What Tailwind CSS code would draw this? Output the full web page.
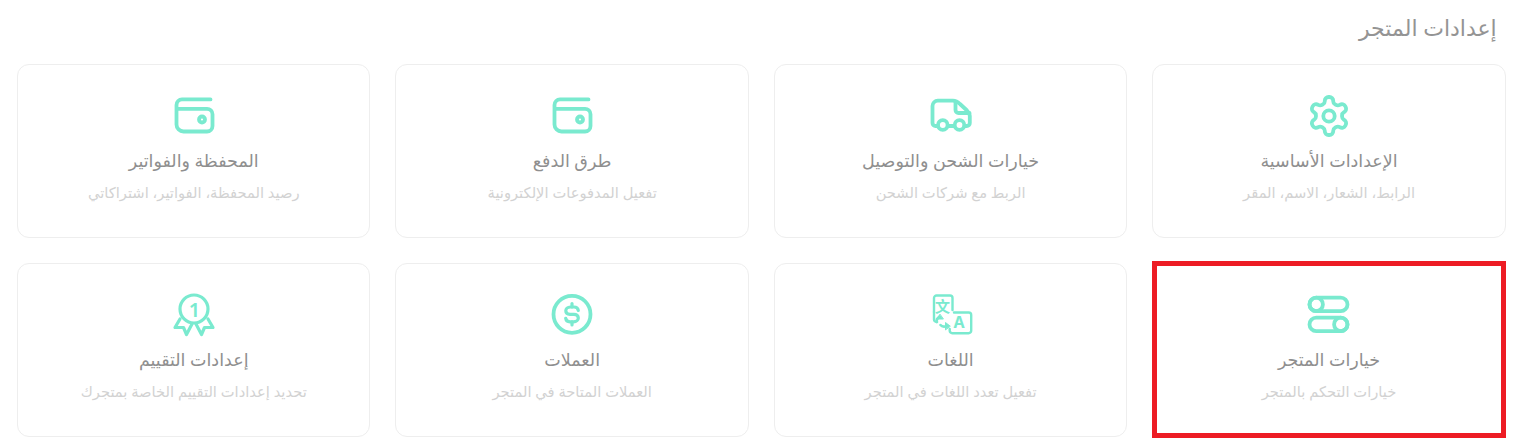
<!DOCTYPE html>
<html lang="ar" dir="rtl">
<head>
<meta charset="utf-8">
<title>إعدادات المتجر</title>
<script src="https://cdn.jsdelivr.net/npm/@tailwindcss/browser@4"></script>
</head>
<body class="bg-white font-['Noto_Sans','DejaVu_Sans',sans-serif] overflow-hidden">
<div class="relative h-[438px] pr-[31.25px] pl-[17px]">

    <!-- العنوان -->
    <h1 class="h-[64px] pt-[13px] pr-[9px] pb-0 text-[22px] leading-[28px] font-normal text-[#949494]">إعدادات المتجر</h1>

    <!-- البطاقات -->
    <div class="grid grid-cols-4 gap-x-[25px] gap-y-[25px]">

        <a class="h-[174px] rounded-xl border border-[#eeeeee] bg-white pt-[27px] flex flex-col items-center">
            <svg class="w-12 h-12 text-[#7aeacf]" viewBox="0 0 48 48" fill="none" stroke="currentColor" stroke-linecap="round" stroke-linejoin="round">
                <g transform="translate(1.2 1.2) scale(1.9)" stroke-width="2">
                    <path d="M12.22 2h-.44a2 2 0 0 0-2 2v.18a2 2 0 0 1-1 1.73l-.43.25a2 2 0 0 1-2 0l-.15-.08a2 2 0 0 0-2.73.73l-.22.38a2 2 0 0 0 .73 2.73l.15.1a2 2 0 0 1 1 1.72v.51a2 2 0 0 1-1 1.74l-.15.09a2 2 0 0 0-.73 2.73l.22.38a2 2 0 0 0 2.73.73l.15-.08a2 2 0 0 1 2 0l.43.25a2 2 0 0 1 1 1.73V20a2 2 0 0 0 2 2h.44a2 2 0 0 0 2-2v-.18a2 2 0 0 1 1-1.73l.43-.25a2 2 0 0 1 2 0l.15.08a2 2 0 0 0 2.73-.73l.22-.39a2 2 0 0 0-.73-2.73l-.15-.08a2 2 0 0 1-1-1.74v-.5a2 2 0 0 1 1-1.74l.15-.09a2 2 0 0 0 .73-2.73l-.22-.38a2 2 0 0 0-2.73-.73l-.15.08a2 2 0 0 1-2 0l-.43-.25a2 2 0 0 1-1-1.73V4a2 2 0 0 0-2-2z"/>
                    <circle cx="12" cy="12" r="3"/>
                </g>
            </svg>
            <h2 class="mt-[7px] text-[17.500px] leading-[26px] font-medium text-[#8f8f8f]">الإعدادات الأساسية</h2>
            <p class="mt-[7px] text-[14.700px] leading-[24px] text-[#d2d2d2]">الرابط، الشعار، الاسم، المقر</p>
        </a>

        <a class="h-[174px] rounded-xl border border-[#eeeeee] bg-white pt-[27px] flex flex-col items-center">
            <svg class="w-12 h-12 text-[#7aeacf]" viewBox="0 0 48 48" fill="none" stroke="currentColor" stroke-width="3.8" stroke-linecap="round" stroke-linejoin="round">
                <path d="M10.500 34H8.500a3 3 0 0 1-3-3V14a5.300 5.300 0 0 1 5.300-5.300H26C29 8.700 31 10 33 12L40 18.500C42 20.500 42.800 21.500 42.800 24V31a3 3 0 0 1-3 3H37.500"/>
                <path d="M28.500 10V18a3 3 0 0 0 3 3H42.500"/>
                <path d="M21 34H27"/>
                <circle cx="15.800" cy="33" r="4.800"/>
                <circle cx="32.500" cy="33" r="4.800"/>
            </svg>
            <h2 class="mt-[7px] text-[17.500px] leading-[26px] font-medium text-[#8f8f8f]">خيارات الشحن والتوصيل</h2>
            <p class="mt-[7px] text-[14.700px] leading-[24px] text-[#d2d2d2]">الربط مع شركات الشحن</p>
        </a>

        <a class="h-[174px] rounded-xl border border-[#eeeeee] bg-white pt-[27px] flex flex-col items-center">
            <svg class="w-12 h-12 text-[#7aeacf]" viewBox="0 0 48 48" fill="none" stroke="currentColor" stroke-width="3.8" stroke-linecap="round" stroke-linejoin="round">
                <path d="M40.500 7.400H12a5.500 5.500 0 0 0-5.500 5.500V32.500a7 7 0 0 0 7 7H37a5.500 5.500 0 0 0 5.500-5.500V22.300A5.500 5.500 0 0 0 37 16.800H6.500"/>
                <circle cx="32" cy="27.500" r="3"/>
            </svg>
            <h2 class="mt-[7px] text-[17.500px] leading-[26px] font-medium text-[#8f8f8f]">طرق الدفع</h2>
            <p class="mt-[7px] text-[14.700px] leading-[24px] text-[#d2d2d2]">تفعيل المدفوعات الإلكترونية</p>
        </a>

        <a class="h-[174px] rounded-xl border border-[#eeeeee] bg-white pt-[27px] flex flex-col items-center">
            <svg class="w-12 h-12 text-[#7aeacf]" viewBox="0 0 48 48" fill="none" stroke="currentColor" stroke-width="3.8" stroke-linecap="round" stroke-linejoin="round">
                <path d="M40.500 7.400H12a5.500 5.500 0 0 0-5.500 5.500V32.500a7 7 0 0 0 7 7H37a5.500 5.500 0 0 0 5.500-5.500V22.300A5.500 5.500 0 0 0 37 16.800H6.500"/>
                <circle cx="32" cy="27.500" r="3"/>
            </svg>
            <h2 class="mt-[7px] text-[17.500px] leading-[26px] font-medium text-[#8f8f8f]">المحفظة والفواتير</h2>
            <p class="mt-[7px] text-[14.700px] leading-[24px] text-[#d2d2d2]">رصيد المحفظة، الفواتير، اشتراكاتي</p>
        </a>

        <a class="h-[174px] rounded-xl border border-[#eeeeee] bg-white pt-[27px] flex flex-col items-center">
            <svg class="w-12 h-12 text-[#7aeacf]" viewBox="0 0 48 48" fill="none" stroke="currentColor" stroke-width="3.8" stroke-linecap="round" stroke-linejoin="round">
                <rect x="4.500" y="6.700" width="38" height="13.400" rx="6.700"/>
                <circle cx="11.200" cy="13.400" r="6.700"/>
                <rect x="4.500" y="26.700" width="38" height="13.400" rx="6.700"/>
                <circle cx="35.800" cy="33.400" r="6.700"/>
            </svg>
            <h2 class="mt-[7px] text-[17.500px] leading-[26px] font-medium text-[#8f8f8f]">خيارات المتجر</h2>
            <p class="mt-[7px] text-[14.700px] leading-[24px] text-[#d2d2d2]">خيارات التحكم بالمتجر</p>
        </a>

        <a class="h-[174px] rounded-xl border border-[#eeeeee] bg-white pt-[27px] flex flex-col items-center">
            <svg class="w-12 h-12 text-[#7aeacf]" viewBox="0 0 48 48" fill="none" stroke="currentColor" stroke-width="2.400" stroke-linecap="round" stroke-linejoin="round">
                <path d="M7 21V7a2.500 2.500 0 0 1 2.500-2.500H23a2.500 2.500 0 0 1 2.500 2.500V19"/>
                <path d="M7 21V28.500a2.500 2.500 0 0 0 2.500 2.500"/>
                <path d="M27 21.500H41.700a2.500 2.500 0 0 1 2.500 2.500V39.700a2.500 2.500 0 0 1-2.500 2.500H25.200a2.500 2.500 0 0 1-2.500-2.500V38"/>
                <path d="M10 31C9 28.500 10.500 27 12.800 26" stroke-width="2.600"/>
                <path d="M13.500 34C15 36 17 36 20 35" stroke-width="2.600"/>
                <path d="M12.800 23.500L9.500 28H16Z" fill="currentColor" stroke-width="1"/>
                <path d="M23 35L18.500 31.500V38.500Z" fill="currentColor" stroke-width="1"/>
                <text x="15.500" y="21" text-anchor="middle" font-size="15" font-weight="700" fill="currentColor" stroke="none" font-family="'Noto Sans CJK SC',sans-serif">文</text>
                <text x="32" y="37" text-anchor="middle" font-size="16" font-weight="700" fill="currentColor" stroke="none" font-family="'Noto Sans',sans-serif">A</text>
            </svg>
            <h2 class="mt-[7px] text-[17.500px] leading-[26px] font-medium text-[#8f8f8f]">اللغات</h2>
            <p class="mt-[7px] text-[14.700px] leading-[24px] text-[#d2d2d2]">تفعيل تعدد اللغات في المتجر</p>
        </a>

        <a class="h-[174px] rounded-xl border border-[#eeeeee] bg-white pt-[27px] flex flex-col items-center">
            <svg class="w-12 h-12 text-[#7aeacf]" viewBox="0 0 48 48" fill="none" stroke="currentColor" stroke-width="3.8" stroke-linecap="round" stroke-linejoin="round">
                <circle cx="24" cy="23.300" r="18.500"/>
                <path d="M24 12.500V16M24 30.800V34" stroke-width="3.200"/>
                <path d="M30.300 19.500C30 17.300 28.300 16 26 16H22.500C19.500 16 17.800 17.800 17.800 19.800C17.800 22 19.500 23.300 22 23.300H26C28.500 23.300 30.300 24.800 30.300 27C30.300 29 28.500 30.800 25.500 30.800H22C19.700 30.800 18 29.500 17.700 27.300" stroke-width="3.200"/>
            </svg>
            <h2 class="mt-[7px] text-[17.500px] leading-[26px] font-medium text-[#8f8f8f]">العملات</h2>
            <p class="mt-[7px] text-[14.700px] leading-[24px] text-[#d2d2d2]">العملات المتاحة في المتجر</p>
        </a>

        <a class="h-[174px] rounded-xl border border-[#eeeeee] bg-white pt-[27px] flex flex-col items-center">
            <svg class="w-12 h-12 text-[#7aeacf]" viewBox="0 0 48 48" fill="none" stroke="currentColor" stroke-width="3.200" stroke-linecap="round" stroke-linejoin="round">
                <circle cx="24" cy="18" r="14"/>
                <path d="M10 28L5 36.500H13.500L16.500 43.500L22 33"/>
                <path d="M38 28L43 36.500H34.500L31.500 43.500L26 33"/>
                <text x="24.500" y="25.500" text-anchor="middle" font-size="20" font-weight="600" fill="currentColor" stroke="none" font-family="'Noto Sans',sans-serif">1</text>
            </svg>
            <h2 class="mt-[7px] text-[17.500px] leading-[26px] font-medium text-[#8f8f8f]">إعدادات التقييم</h2>
            <p class="mt-[7px] text-[14.700px] leading-[24px] text-[#d2d2d2]">تحديد إعدادات التقييم الخاصة بمتجرك</p>
        </a>
    </div>

    <!-- التحديد الأحمر -->
    <div class="absolute left-[1152px] top-[261px] w-[354px] h-[177px] border-[5px] border-[#ed1c24]"></div>
</div>
</body>
</html>
